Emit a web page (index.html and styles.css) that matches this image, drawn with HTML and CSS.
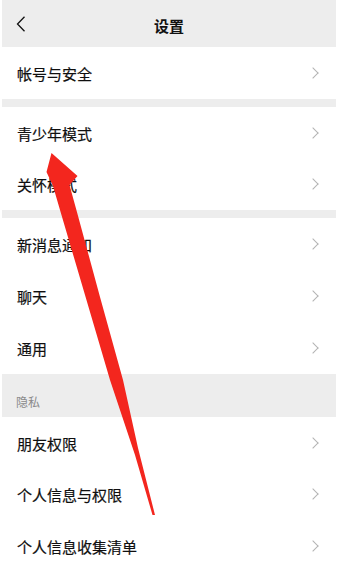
FILE: index.html
```html
<!DOCTYPE html>
<html lang="zh-CN">
<head>
<meta charset="utf-8">
<title>设置</title>
<link rel="stylesheet" href="styles.css">
</head>
<body>
<div class="screen">
  <header class="topbar">
    <svg class="back" width="10" height="16" viewBox="0 0 10 16"><path d="M8.5 0.8 L1.5 8 L8.5 15.2" fill="none" stroke="#111" stroke-width="1.3"/></svg>
    <div class="title">设置</div>
  </header>

  <section class="group">
    <div class="row"><span class="label">帐号与安全</span><span class="chev"></span></div>
  </section>

  <section class="group">
    <div class="row"><span class="label">青少年模式</span><span class="chev"></span></div>
    <div class="row"><span class="label">关怀模式</span><span class="chev"></span></div>
  </section>

  <section class="group">
    <div class="row"><span class="label">新消息通知</span><span class="chev"></span></div>
    <div class="row"><span class="label">聊天</span><span class="chev"></span></div>
    <div class="row"><span class="label">通用</span><span class="chev"></span></div>
  </section>

  <div class="section-title">隐私</div>
  <section class="group last">
    <div class="row"><span class="label">朋友权限</span><span class="chev"></span></div>
    <div class="row"><span class="label">个人信息与权限</span><span class="chev"></span></div>
    <div class="row"><span class="label">个人信息收集清单</span><span class="chev"></span></div>
  </section>
</div>

<svg class="arrow" width="340" height="577" viewBox="0 0 340 577">
  <polygon points="51.5,153 77.5,176 69.5,185 77.5,214 100,297 123,380 138,448 155,515 152.5,515 135,455 110,380 85,295 60,210 53,186 46.5,172" fill="#f3261e"/>
</svg>
</body>
</html>
```

FILE: styles.css
```css
html, body {
  margin: 0;
  padding: 0;
  background: #ffffff;
}

body {
  font-family: "Noto Sans CJK SC", "Noto Sans", sans-serif;
  color: #191919;
  overflow: hidden;
  width: 340px;
  height: 577px;
  position: relative;
}

.screen {
  margin-left: 2px;
  width: 334px;
  background: #ededed;
  display: flex;
  flex-direction: column;
  min-height: 577px;
}

.topbar {
  height: 47px;
  display: flex;
  align-items: center;
  justify-content: center;
  position: relative;
  background: #ededed;
}

.back {
  position: absolute;
  left: 14px;
  top: 16px;
}

.title {
  font-size: 15px;
  font-weight: 700;
  color: #111;
  margin-top: 3px;
}

.group {
  background: #ffffff;
  margin-bottom: 8px;
}

.group.last {
  margin-bottom: 0;
  flex: 1;
}

.row {
  height: 51.8px;
  display: flex;
  align-items: center;
  justify-content: space-between;
  padding: 0 17px 0 15px;
}

.label {
  font-size: 15px;
  line-height: 20px;
  color: #0f0f0f;
  margin-top: 2px;
  -webkit-text-stroke: 0.2px #0f0f0f;
}

.chev {
  width: 7px;
  height: 7px;
  border-top: 1.3px solid #b3b3b3;
  border-right: 1.3px solid #b3b3b3;
  transform: rotate(45deg);
  margin-right: 2px;
}

.section-title {
  height: 31px;
  padding: 12px 0 0 14px;
  display: flex;
  align-items: center;
  font-size: 12px;
  color: #8a8a8a;
  margin-top: -8px;
}

.arrow {
  position: absolute;
  left: 0;
  top: 0;
  pointer-events: none;
}
```
